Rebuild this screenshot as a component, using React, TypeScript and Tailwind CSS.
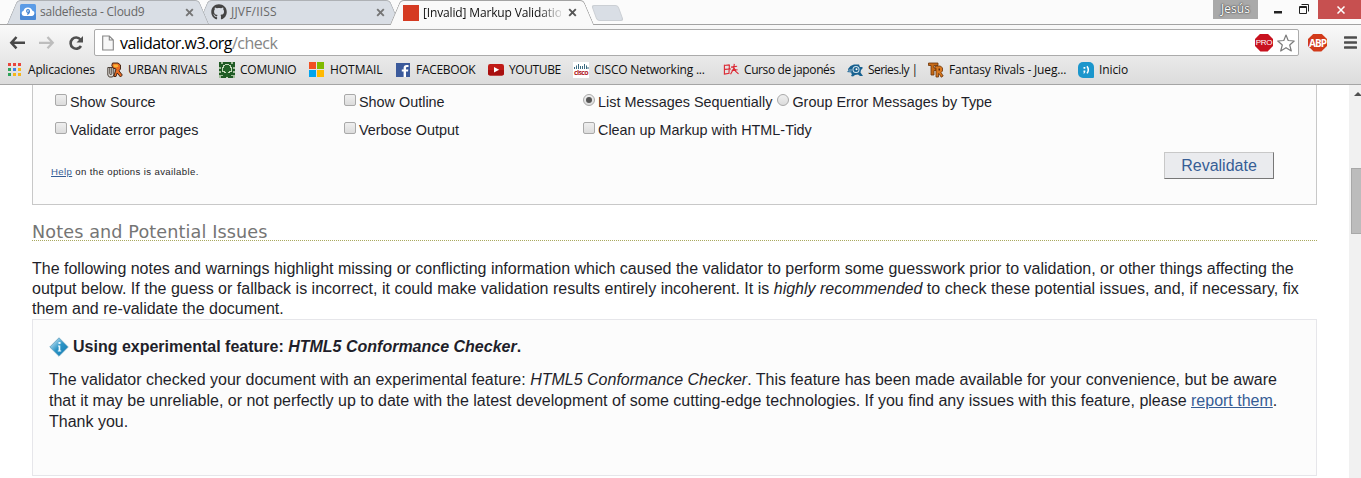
import React from "react";
import { FaGithub } from "react-icons/fa";

type TabProps = {
  title: string;
  icon: React.ReactNode;
  className: string;
  active?: boolean;
  titleClass: string;
};

function Tab({ title, icon, className, active = false, titleClass }: TabProps) {
  const fill = active ? "bg-[#f9f9f9] border-[#a3a3a3]" : "bg-[#d9dee5] border-[#aeb1b5]";
  return (
    <div className={`relative h-[24px] shrink-0 ${className}`}>
      <div className={`absolute inset-y-0 left-0 w-1/2 origin-center -skew-x-[23deg] rounded-tl-[4px] border-t border-l ${fill}`} />
      <div className={`absolute inset-y-0 right-0 w-1/2 origin-center skew-x-[23deg] rounded-tr-[4px] border-t border-r ${fill}`} />
      <div className={`absolute inset-x-[14px] inset-y-0 border-t ${fill}`} />
      <div className="relative flex h-full items-center pl-[8px]">
        <span className="flex h-4 w-4 shrink-0 items-center justify-center">{icon}</span>
        <span className={`ml-[4px] w-[138px] text-[12px] leading-[18px] whitespace-nowrap ${active ? "text-[#111]" : "text-[#686868]"} ${titleClass}`}>
          {title}
        </span>
        <svg className="ml-[7px] h-[9px] w-[9px] shrink-0" viewBox="0 0 9 9">
          <path d="M1.2 1.2 7.8 7.8M7.8 1.2 1.2 7.8" stroke={active ? "#555" : "#757575"} strokeWidth="1.9" fill="none" />
        </svg>
      </div>
    </div>
  );
}

const CloudIcon = () => (
  <svg width="16" height="16" viewBox="0 0 16 16">
    <rect width="16" height="16" rx="1.5" fill="#5b9be6" />
    <rect y="9" width="16" height="7" rx="1.5" fill="#4a89d6" />
    <path d="M4 12a2.700 2.700 0 0 1-.4-5.300A4.500 4.500 0 0 1 12.200 6.500a2.800 2.800 0 0 1 0 5.500Z" fill="#fff" />
    <circle cx="8" cy="7" r="1.400" fill="none" stroke="#3c7fd0" strokeWidth="1.100" />
    <path d="M9.400 7c0 2-.5 3-2.400 3.200" fill="none" stroke="#3c7fd0" strokeWidth="1.100" />
  </svg>
);

const AppsIcon = () => (
  <svg width="16" height="16" viewBox="0 0 16 16">
    <path d="M1 1h3v3H1zM6 1h3v3H6zM11 1h3v3h-3z" fill="#e8453c" />
    <path d="M1 6h3v3H1zM1 11h3v3H1z" fill="#2fa35a" />
    <path d="M6 6h3v3H6z" fill="#3f80e8" />
    <path d="M11 6h3v3h-3zM6 11h3v3H6zM11 11h3v3h-3z" fill="#f6b61c" />
  </svg>
);

const UrbanIcon = () => (
  <svg width="16" height="16" viewBox="0 0 16 16">
    <path d="M.8 5.500h6V13l-1.300 2H2.200L.8 13Z" fill="#d8d4d0" stroke="#4b4038" strokeWidth="1" />
    <path d="M2.800 6v5.500q0 1 1 1t1-1V6" fill="none" stroke="#4b4038" strokeWidth="1" />
    <path d="M5.500 1h5.500l2.500 2v4L12 8.800l3.300 4.200-1.800 2-3.300-4-1.200 3.500H6.800L8.500 9l.5-2-3-1-1.200-2.500Z" fill="#ea6a20" stroke="#492a18" strokeWidth="1" />
    <path d="M6.500 2.500h4l1 2L9 5.600l-2.300-.8Z" fill="#f9b83a" />
  </svg>
);

const ComunioIcon = () => (
  <svg width="16" height="16" viewBox="0 0 16 16">
    <path d="M0 0h16v16H0z" fill="#205b25" />
    <path d="M0 5h2v2H0zM0 9h2v2H0zM14 5h2v2h-2zM14 9h2v2h-2zM2 0h2v2H2zM12 0h2v2h-2zM0 13h4v1H2v2H0zM16 13h-4v1h2v2h2z" fill="#a3bd9b" />
    <path d="M6 2h4v1h2v2h1v5h-2v1H9v5H7v-5H5v-1H3V5h1V3h2z" fill="#c5d8bb" />
    <path d="M6 3h4v1h1v2h1v3h-2v1H9v5H7v-5H6V9H4V6h1V4h1z" fill="#246329" />
  </svg>
);

const HotmailIcon = () => (
  <svg width="16" height="16" viewBox="0 0 16 16">
    <path d="M0 0h7v7H0z" fill="#f25022" />
    <path d="M8 0h7v7H8z" fill="#7fba00" />
    <path d="M0 8h7v7H0z" fill="#00a4ef" />
    <path d="M8 8h7v7H8z" fill="#ffb900" />
  </svg>
);

const FacebookIcon = () => (
  <svg width="16" height="16" viewBox="0 0 16 16">
    <path d="M1 1h14v14H1z" fill="#3b5a9b" />
    <path d="M13.500 3v2h-1.200c-1 0-1.300.4-1.300 1.200V7.500h2.300L13 9.600h-2V15H8.600V9.600H6.800V7.500h1.800V6c0-2 1.200-3 3-3Z" fill="#fff" />
  </svg>
);

const YoutubeIcon = () => (
  <svg width="16" height="16" viewBox="0 0 16 16">
    <rect y="2" width="16" height="11.500" rx="2.200" fill="#c01b17" />
    <path d="M0 8h16v3.500q0 2-2 2H2q-2 0-2-2Z" fill="#a80f0f" />
    <path d="M6 5v5.600L11.200 7.800Z" fill="#fff" />
  </svg>
);

const CiscoIcon = () => (
  <span className="flex h-4 w-4 flex-col items-center bg-white">
    <svg width="16" height="8" viewBox="0 0 16 8" className="shrink-0">
      <path d="M1.500 5v2M3.500 3.500V7M5.500 2v5M7.500 4v3M9.500 4v3M11.500 2v5M13.500 3.500V7M15 5v2" stroke="#3a6a80" strokeWidth="1" />
    </svg>
    <span className="text-[7px] leading-[6px] font-bold tracking-[-0.6px] text-[#b32025]">cisco</span>
  </span>
);

const JapaneseIcon = () => (
  <svg width="17" height="16" viewBox="0 0 17 16" fill="none" stroke="#dc2a35" strokeWidth="1.200">
    <path d="M1.500 2.500v10.500M1 3.200l6-.7M6.800 2.500l-.5 9.500M1.500 7.300l7-.4M1.200 12.400 7 11.500" />
    <path d="M8.500 5l6.500-1M12 1.500l-.6 5L8 12.500M11.800 6l1.700 3.500 3 2.700M9.200 8.500l6.300-.8" />
  </svg>
);

const SeriesIcon = () => (
  <svg width="16" height="16" viewBox="0 0 16 16">
    <path d="M1 7 3.500 4 7 2.500h5L13 5h2.500v1.500L14 8l-.5 2.500L16 14h-3l-2-1.500L8 13l-2 1.500-2-.5 1-2-1.500-1.500L0 10l1.500-1.500Z" fill="#17608f" />
    <circle cx="9" cy="7.500" r="3.500" fill="#d5e5ee" />
    <circle cx="9" cy="7.500" r="2.500" fill="#17608f" />
    <circle cx="9.500" cy="7.200" r="1" fill="#fff" />
    <path d="M2 8h3M1.500 10h3" stroke="#cde" strokeWidth=".7" />
  </svg>
);

const RivalsIcon = () => (
  <svg width="16" height="16" viewBox="0 0 16 16">
    <path d="M.5 1h9.500v2.500H6V6h2v2.500H6V13H3V3.500H.5Z" fill="#c66a17" stroke="#6a3209" strokeWidth=".8" />
    <path d="M7.500 4h5l2 2v3L13 10.500l2.200 3.500-2 1.200L11 11.500h-.5V15H8V6.500L7 5.500Z" fill="#d9781f" stroke="#6a3209" strokeWidth=".8" />
    <path d="M10.500 6.500H12v2h-1.500z" fill="#5a2908" />
  </svg>
);

const InicioIcon = () => (
  <span className="flex h-4 w-4 items-center justify-center rounded-tl-[5px] rounded-tr-[5px] rounded-br-[1px] rounded-bl-[5px] bg-[#1b96cc]">
    <svg width="16" height="16" viewBox="0 0 16 16">
      <path d="M5.500 5h1.800v1.800H5.500zM5.500 8.500h1.800v1.600l-1 1.400h-1l.6-1.400h-.4z" fill="#fff" />
      <path d="M9 4.200q2.600 3.600 0 7.200" fill="none" stroke="#fff" strokeWidth="1.500" />
    </svg>
  </span>
);

const bookmarks = [
  { label: "Aplicaciones", icon: <AppsIcon />, width: "w-[100px]", spacing: "tracking-[-0.2px]" },
  { label: "URBAN RIVALS", icon: <UrbanIcon />, width: "w-[112px]", spacing: "tracking-[-0.25px]" },
  { label: "COMUNIO", icon: <ComunioIcon />, width: "w-[90px]", spacing: "tracking-[-0.25px]" },
  { label: "HOTMAIL", icon: <HotmailIcon />, width: "w-[86px]", spacing: "tracking-[-0.05px]" },
  { label: "FACEBOOK", icon: <FacebookIcon />, width: "w-[93px]", spacing: "tracking-[-0.3px]" },
  { label: "YOUTUBE", icon: <YoutubeIcon />, width: "w-[85px]", spacing: "tracking-[-0.4px]" },
  { label: "CISCO Networking ...", icon: <CiscoIcon />, width: "w-[150px]", spacing: "tracking-[-0.2px]" },
  { label: "Curso de japonés", icon: <JapaneseIcon />, width: "w-[124px]", spacing: "tracking-[-0.4px]" },
  { label: "Series.ly |", icon: <SeriesIcon />, width: "w-[81px]", spacing: "tracking-[-0.55px]" },
  { label: "Fantasy Rivals - Jueg...", icon: <RivalsIcon />, width: "w-[150px]", spacing: "tracking-[-0.17px]" },
  { label: "Inicio", icon: <InicioIcon />, width: "w-[70px]", spacing: "tracking-[-0.1px]" },
];

function WindowControls() {
  return (
    <div className="ml-auto flex h-[19px] items-stretch">
      <div className="flex w-[45px] items-center justify-center bg-[#a9a9a9] pb-px text-[12px] text-white [text-shadow:0_0_2px_#333,0_0_1px_#333]">
        Jesús
      </div>
      <svg className="h-[19px] w-[60px]" viewBox="0 0 60 19">
        <path d="M16 11h8v2.500h-8z" fill="#222" />
        <path d="M41.500 6.500h7v7h-7zM41.500 7.500h7M43.500 4.500h7v7" fill="none" stroke="#222" />
      </svg>
      <div className="flex w-[43px] items-center bg-[#c75050] pl-[19px]">
        <svg width="8" height="8" viewBox="0 0 8 8">
          <path d="m.5.5 7 7M7.500.5l-7 7" stroke="#fff" strokeWidth="1.500" />
        </svg>
      </div>
    </div>
  );
}

function Toolbar() {
  return (
    <div className="flex h-[61px] flex-col border-t border-b border-t-[#a3a3a3] border-b-[#a5a5a5] bg-linear-to-b from-[#f9f9f9] to-[#dcdcdc]">
      <div className="mt-[4px] flex h-[27px] items-center">
        <svg className="ml-[9px] h-[16px] w-[16px]" viewBox="0 0 16 16">
          <path d="M7.500 2 2.300 7.800l5.200 5.500M2.300 7.800H16" fill="none" stroke="#484848" strokeWidth="2.500" />
        </svg>
        <svg className="ml-[14px] h-[16px] w-[16px]" viewBox="0 0 16 16">
          <path d="m8.500 2 5.200 5.800-5.200 5.500M13.700 7.800H0" fill="none" stroke="#bdbdbd" strokeWidth="2.300" />
        </svg>
        <svg className="ml-[13px] h-[16px] w-[16px]" viewBox="0 0 16 16">
          <path d="M12.500 4.500A5.600 5.600 0 1 0 13 11" fill="none" stroke="#505050" strokeWidth="2.600" />
          <path d="M15 1v6.500H8.500Z" fill="#505050" />
        </svg>
        <div className="ml-[10px] flex h-[27px] w-[1205px] items-center rounded-[2px] border border-[#ababab] bg-white">
          <svg className="ml-[7px] h-[16px] w-[12px]" viewBox="0 0 12 16">
            <path d="M.7 1h6.600l4 4v10H.7zM7.300 1v4h4" fill="#f7f7f7" stroke="#858585" strokeWidth="1.100" />
          </svg>
          <span className="ml-[6px] text-[16px] leading-[24px] tracking-[-0.52px] whitespace-nowrap text-black">
            validator.w3.org<span className="text-[#858585]">/check</span>
          </span>
          <span className="ml-auto flex h-[18px] w-[18px] items-center justify-center bg-[#c8121f] font-['Liberation_Sans'] text-[8px] leading-[8px] tracking-[-0.3px] text-white [clip-path:polygon(30%_0,70%_0,100%_30%,100%_70%,70%_100%,30%_100%,0_70%,0_30%)]">
            PRO
          </span>
          <svg className="mr-[3px] ml-[4px] h-[18px] w-[18px]" viewBox="0 0 18 18">
            <path d="m9 1 2.200 5.500 6 .5-4.500 4 1.600 6L9 13.700 3.700 17l1.600-6L.8 7l6-.5Z" fill="#fff" stroke="#7c7c7c" strokeWidth="1.200" strokeLinejoin="round" />
          </svg>
        </div>
        <span className="ml-[9px] flex h-[18px] w-[19px] items-center justify-center bg-[#d23a1a] text-[10px] leading-[10px] font-bold tracking-[-0.9px] text-white [clip-path:polygon(30%_0,70%_0,100%_30%,100%_70%,70%_100%,30%_100%,0_70%,0_30%)]">
          ABP
        </span>
        <svg className="ml-[17px] h-[13px] w-[13px]" viewBox="0 0 13 13">
          <path d="M1 1.500h11M1 6.500h11M1 11.500h11" stroke="#4d4d4d" strokeWidth="2.700" strokeLinecap="round" />
        </svg>
      </div>
      <div className="flex h-[28px] items-center pl-[7px]">
        {bookmarks.map((b) => (
          <div key={b.label} className={`flex shrink-0 items-center ${b.width}`}>
            <span className="flex h-4 w-4 shrink-0 items-center">{b.icon}</span>
            <span className={`ml-[5px] text-[12px] leading-[16px] whitespace-nowrap text-[#101010] ${b.spacing}`}>{b.label}</span>
          </div>
        ))}
      </div>
    </div>
  );
}

function Check({ label, radio = false, checked = false }: { label: string; radio?: boolean; checked?: boolean }) {
  return (
    <label className="flex h-[28px] items-center">
      <span className={`mb-[4px] flex h-[12px] w-[12px] shrink-0 items-center justify-center border border-[#a9a9a9] bg-linear-to-b from-[#efefef] to-[#dcdcdc] ${radio ? "rounded-full" : "rounded-[2px]"}`}>
        {checked && <span className="h-[6px] w-[6px] rounded-full bg-[#555]" />}
      </span>
      <span className="mt-[2px] ml-[3px] text-[14.400px] whitespace-nowrap">{label}</span>
    </label>
  );
}

const InfoIcon = () => (
  <svg className="h-[20px] w-[20px] shrink-0" viewBox="0 0 20 20">
    <defs>
      <linearGradient id="info" x1="0" y1="0" x2="1" y2="1">
        <stop offset="0.2" stopColor="#a5d5ec" />
        <stop offset="0.5" stopColor="#2b94c6" />
        <stop offset="1" stopColor="#1279b2" />
      </linearGradient>
    </defs>
    <path d="M10 .8 19.200 10 10 19.200.8 10Z" fill="url(#info)" stroke="#6fa9c6" strokeWidth="1" strokeLinejoin="round" />
    <path d="M9.500 5h2v2h-2zM9 8.500h2.300v5h.9v1H8.800v-1h.8v-4H9Z" fill="#e8f7ff" />
  </svg>
);

export default function App() {
  return (
    <div className="flex h-[478px] w-[1361px] flex-col overflow-hidden bg-white font-['Open_Sans',sans-serif]">
      <header className="shrink-0">
        <div className="flex h-[24px] bg-[#fbfbfb] pl-[12px]">
          <Tab title="saldefiesta - Cloud9" icon={<CloudIcon />} className="z-[2] w-[191px]" titleClass="tracking-[-0.25px]" />
          <Tab title="JJVF/IISS" icon={<FaGithub size={16} color="#444" />} className="z-[1] w-[192px]" titleClass="tracking-[0.2px]" />
          <Tab
            title="[Invalid] Markup Validatio"
            icon={<span className="h-4 w-4 bg-[#d53a22]" />}
            className="z-[3] -mb-px h-[25px] w-[193px]"
            titleClass="tracking-[-0.15px] [mask-image:linear-gradient(to_right,black_115px,transparent_142px)]"
            active
          />
          <div className="mt-[5px] ml-[6px] h-[16px] w-[27px] skew-x-[20deg] rounded-[3px] border border-[#cbcfd4] bg-[#d9dee5]" />
          <WindowControls />
        </div>
        <Toolbar />
      </header>

      <div className="flex min-h-0 flex-1 font-['Liberation_Sans',Arial,sans-serif] text-[#1f1f2a]">
        <main className="w-[1349px] shrink-0 pl-[32px]">
          <section className="h-[120px] w-[1285px] border-x border-b border-[#c8c8c8] bg-[#fcfcfc] px-[18px]">
            <div className="grid grid-cols-[289px_239px_1fr] pt-[3px] pl-[4px]">
              <Check label="Show Source" />
              <Check label="Show Outline" />
              <div className="flex gap-[5px]">
                <Check label="List Messages Sequentially" radio checked />
                <Check label="Group Error Messages by Type" radio />
              </div>
              <Check label="Validate error pages" />
              <Check label="Verbose Output" />
              <Check label="Clean up Markup with HTML-Tidy" />
            </div>
            <div className="flex items-start justify-between pt-[8px] pr-[24px]">
              <p className="mt-[13px] text-[9.600px] leading-[14px] tracking-[0.37px] whitespace-nowrap">
                <a className="text-[#365d95] underline">Help</a> on the options is available.
              </p>
              <button className="h-[27px] w-[110px] border border-t-[#c8c8c8] border-r-[#777] border-b-[#777] border-l-[#c8c8c8] bg-[#eaebee] text-[16px] leading-[25px] text-[#365d95]">
                Revalidate
              </button>
            </div>
          </section>

          <h2 className="mt-[17px] h-[19px] w-[1285px] border-b border-dotted border-[#a9a95f] font-['DejaVu_Sans',Verdana,sans-serif] text-[17.600px] leading-[21px] tracking-[0.12px] whitespace-nowrap text-[#757575]">
            Notes and Potential Issues
          </h2>

          <p className="mt-[18px] text-[16px] leading-[20px] whitespace-nowrap">
            The following notes and warnings highlight missing or conflicting information which caused the validator to perform some guesswork prior to validation, or other things affecting the
            <br />
            <span className="tracking-[0.008px]">
              output below. If the guess or fallback is incorrect, it could make validation results entirely incoherent. It is <em>highly recommended</em> to check these potential issues, and, if necessary, fix
            </span>
            <br />
            them and re-validate the document.
          </p>

          <section className="h-[157px] w-[1285px] border border-[#e6e6ea] bg-[#fcfcfc] pt-[16px] pl-[16px]">
            <h3 className="flex h-[22px] items-center gap-[4px] text-[16px] font-bold whitespace-nowrap">
              <InfoIcon />
              <span>
                Using experimental feature: <em>HTML5 Conformance Checker</em>.
              </span>
            </h3>
            <p className="mt-[11px] text-[16px] leading-[21px] whitespace-nowrap">
              The validator checked your document with an experimental feature: <em>HTML5 Conformance Checker</em>. This feature has been made available for your convenience, but be aware
              <br />
              that it may be unreliable, or not perfectly up to date with the latest development of some cutting-edge technologies. If you find any issues with this feature, please{" "}
              <a className="text-[#365d95] underline">report them</a>.
              <br />
              Thank you.
            </p>
          </section>
        </main>

        <aside className="flex w-[12px] shrink-0 flex-col bg-[#f1f1f1] pl-[2px]">
          <svg className="mt-[7px] ml-[3px] h-[4px] w-[7px]" viewBox="0 0 7 4">
            <path d="M0 4 4 0 8 4Z" fill="#505050" />
          </svg>
          <div className="mt-[72px] h-[66px] border border-r-0 border-[#a8a8a8] bg-[#bcbcbc]" />
        </aside>
      </div>
    </div>
  );
}
